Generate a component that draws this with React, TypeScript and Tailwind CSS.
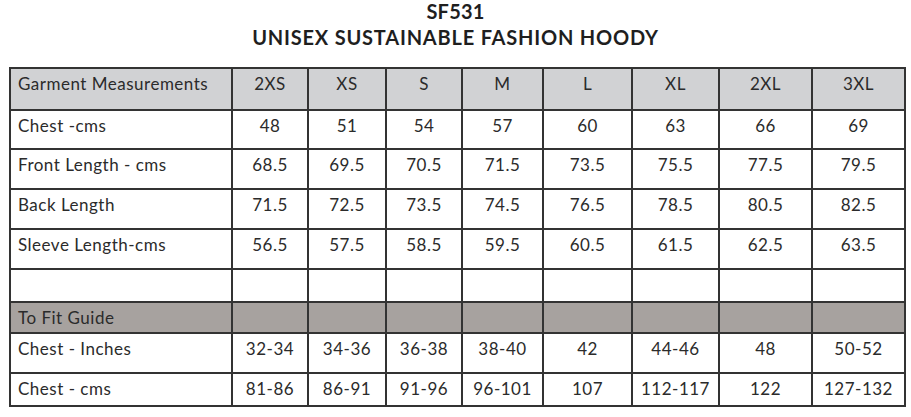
const sizes = ["2XS", "XS", "S", "M", "L", "XL", "2XL", "3XL"];

const measurements: { label: string; values: string[] }[] = [
  { label: "Chest -cms", values: ["48", "51", "54", "57", "60", "63", "66", "69"] },
  { label: "Front Length - cms", values: ["68.5", "69.5", "70.5", "71.5", "73.5", "75.5", "77.5", "79.5"] },
  { label: "Back Length", values: ["71.5", "72.5", "73.5", "74.5", "76.5", "78.5", "80.5", "82.5"] },
  { label: "Sleeve Length-cms", values: ["56.5", "57.5", "58.5", "59.5", "60.5", "61.5", "62.5", "63.5"] },
];

const fitGuide: { label: string; values: string[]; h: string }[] = [
  { label: "Chest - Inches", values: ["32-34", "34-36", "36-38", "38-40", "42", "44-46", "48", "50-52"], h: "h-[40px]" },
  { label: "Chest - cms", values: ["81-86", "86-91", "91-96", "96-101", "107", "112-117", "122", "127-132"], h: "h-[33px]" },
];

const colWidths = ["w-[222px]", "w-[76px]", "w-[78px]", "w-[76px]", "w-[81px]", "w-[89px]", "w-[87px]", "w-[93px]", "w-[93px]"];

const cell = "border-2 border-[#333] align-top pt-[5px] leading-[20px]";

export default function App() {
  return (
    <div className="w-[911px] h-[417px] bg-white font-['Lato',sans-serif] text-[#2b2b2b]">
      <div className="text-center font-bold text-[20px] leading-[26px] text-[#1f1f1f] -mt-[2px]">
        <p className="tracking-[0.2px]">SF531</p>
        <p className="tracking-[0.8px]">UNISEX SUSTAINABLE FASHION HOODY</p>
      </div>
      <table className="mt-[17px] ml-[9px] border-collapse table-fixed w-[897px] text-[17px] tracking-[0.5px]">
        <colgroup>
          {colWidths.map((w, i) => (
            <col key={i} className={w} />
          ))}
        </colgroup>
        <tbody>
          <tr className="h-[42px] bg-[#d1d2d4]">
            <td className={`${cell} pl-[7px]`}>Garment Measurements</td>
            {sizes.map((s) => (
              <td key={s} className={`${cell} text-center`}>
                {s}
              </td>
            ))}
          </tr>
          {measurements.map((row, r) => (
            <tr key={row.label} className={r === 0 ? "h-[39px]" : "h-[40px]"}>
              <td className={`${cell} pl-[7px]`}>{row.label}</td>
              {row.values.map((v, i) => (
                <td key={i} className={`${cell} text-center`}>
                  {v}
                </td>
              ))}
            </tr>
          ))}
          <tr className="h-[33px]">
            {colWidths.map((_, i) => (
              <td key={i} className="border-2 border-[#333]" />
            ))}
          </tr>
          <tr className="h-[31px] bg-[#a7a29f]">
            <td className={`${cell} pl-[7px] pt-[3px]`}>To Fit Guide</td>
            {sizes.map((s) => (
              <td key={s} className="border-2 border-[#333]" />
            ))}
          </tr>
          {fitGuide.map((row) => (
            <tr key={row.label} className={row.h}>
              <td className={`${cell} pl-[7px]`}>{row.label}</td>
              {row.values.map((v, i) => (
                <td key={i} className={`${cell} text-center`}>
                  {v}
                </td>
              ))}
            </tr>
          ))}
        </tbody>
      </table>
    </div>
  );
}
